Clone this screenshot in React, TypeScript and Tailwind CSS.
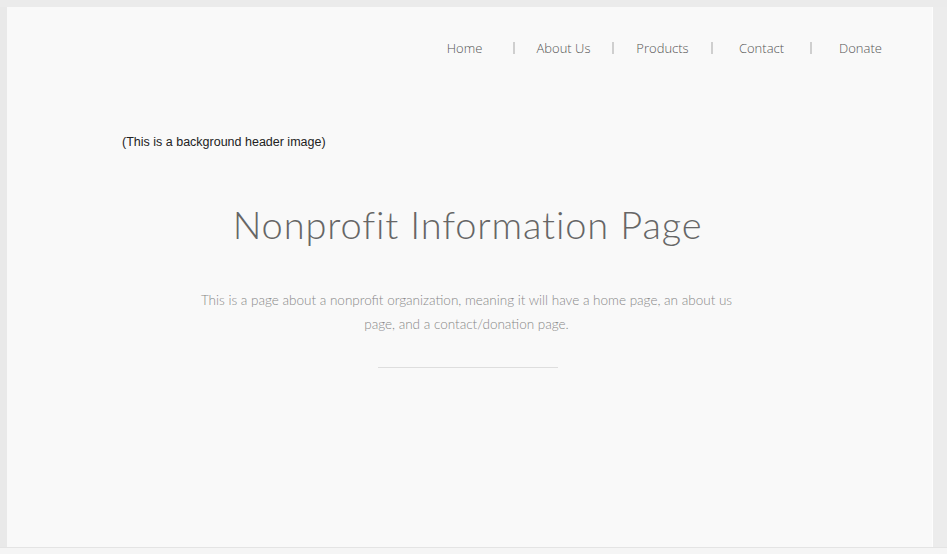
import React from "react";

const items = ["Home", "About Us", "Products", "Contact", "Donate"];

export default function App() {
  return (
    <div className="w-[947px] h-[554px] bg-[#ebebeb] flex flex-col overflow-hidden">
      <div className="h-[7px] shrink-0" />
      <div className="flex h-[540px] shrink-0">
        <div className="w-[7px] shrink-0 bg-[#e9e9e9]" />
        <div className="w-[926px] shrink-0 bg-[#f9f9f9] border-r border-[#fdfdfd] flex flex-col">
          <nav className="flex justify-end pr-[23px] pt-[32px]" style={{ fontFamily: '"Open Sans", sans-serif' }}>
            {items.map((it, i) => (
              <div key={it} className="flex items-center">
                {i > 0 && <div className="w-[2px] h-[12px] bg-[#cfcfcf]" />}
                <div className="w-[97px] text-center text-[13px] font-light text-[#555] leading-[18px]">{it}</div>
              </div>
            ))}
          </nav>
          <p
            className="mt-[77px] ml-[115px] text-[12.5px] leading-[16px] text-[#222]"
            style={{ fontFamily: '"Liberation Sans", Arial, sans-serif' }}
          >
            (This is a background header image)
          </p>
          <h1
            className="mt-[50px] text-center text-[38px] leading-[48px] font-light tracking-[0.85px] text-[#666] pr-[4px]"
            style={{ fontFamily: 'Lato, sans-serif' }}
          >
            Nonprofit Information Page
          </h1>
          <p
            className="mt-[40px] mx-auto w-[560px] text-center text-[13.5px] leading-[24px] font-light text-[#888] relative left-[-3px]"
            style={{ fontFamily: 'Lato, sans-serif' }}
          >
            This is a page about a nonprofit organization, meaning it will have a home page, an about us page, and a contact/donation page.
          </p>
          <div className="mt-[31px] mx-auto w-[180px] h-px bg-[#dedede] relative left-[-2px]" />
        </div>
        <div className="flex-1 bg-[#ececec]" />
      </div>
      <div className="h-[7px] shrink-0 bg-[#f5f5f5] border-t border-[#e4e4e4]" />
    </div>
  );
}
